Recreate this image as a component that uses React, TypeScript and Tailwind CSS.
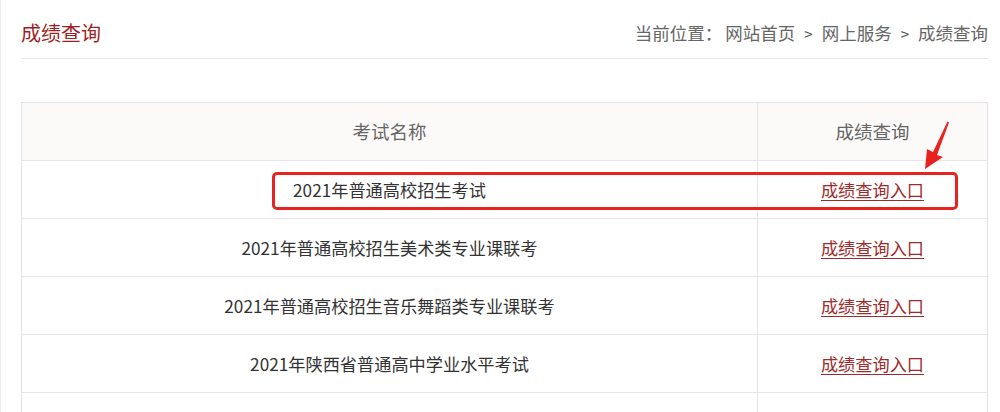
import React from 'react';

const exams = [
  '2021年普通高校招生考试',
  '2021年普通高校招生美术类专业课联考',
  '2021年普通高校招生音乐舞蹈类专业课联考',
  '2021年陕西省普通高中学业水平考试',
  '',
];

export default function App() {
  return (
    <div
      className="h-[412px] bg-white border-l border-[#eeeeee] pl-5 pr-3 overflow-hidden"
      style={{ fontFamily: '"Noto Sans CJK SC", "Noto Sans", sans-serif' }}
    >
      {/* Header */}
      <div className="flex items-center justify-between h-[59px] border-b border-[#e8e8e8] pt-[8px]">
        <h1 className="text-[20px] text-[#9e1f1f] leading-none">成绩查询</h1>
        <div className="flex items-center text-[17.5px] text-[#666666] leading-none">
          <span>当前位置：</span>
          <span className="ml-[3px]">网站首页</span>
          <span className="mx-[9px] text-[15px] text-[#555555]">&gt;</span>
          <span>网上服务</span>
          <span className="mx-[9px] text-[15px] text-[#555555]">&gt;</span>
          <span>成绩查询</span>
        </div>
      </div>

      {/* Table */}
      <div className="relative mt-[43px]">
        <div className="border border-[#e3e3e3] border-b-0">
          <div className="grid grid-cols-[736px_1fr] h-[58px] bg-[#fbfaf9] border-b border-[#e6e6e6] text-[18.5px] text-[#666666]">
            <div className="flex items-center justify-center border-r border-[#e6e6e6]">考试名称</div>
            <div className="flex items-center justify-center">成绩查询</div>
          </div>
          {exams.map((name, i) => (
            <div
              key={i}
              className="grid grid-cols-[736px_1fr] h-[58px] border-b border-[#e6e6e6] text-[17.2px]"
            >
              <div className="flex items-center justify-center border-r border-[#e6e6e6] text-[#333333]">
                {name}
              </div>
              <div className="flex items-center justify-center">
                {name && (
                  <a href="#" className="text-[#9e2a2a] underline underline-offset-[3px] decoration-1">
                    成绩查询入口
                  </a>
                )}
              </div>
            </div>
          ))}
        </div>

        {/* Highlight box */}
        <div className="absolute left-[251px] top-[70px] w-[686px] h-[38px] border-[3px] border-[#e8231f] rounded-[5px] pointer-events-none" />

        {/* Arrow */}
        <svg
          className="absolute left-[895px] top-[17px] pointer-events-none"
          width="40"
          height="52"
          viewBox="0 0 40 52"
        >
          <path d="M31.5 2.5 L33 3.5 L21 36 L27 38 L9 50 L11 30 L17 33 Z" fill="#e8231f" />
        </svg>
      </div>
    </div>
  );
}
